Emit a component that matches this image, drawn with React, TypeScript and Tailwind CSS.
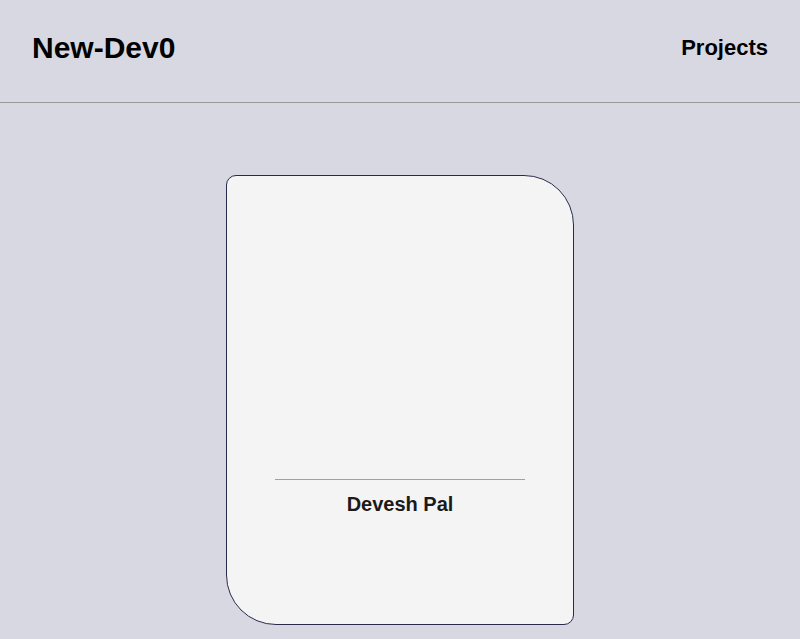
export default function App() {
  return (
    <div className="min-h-[639px] bg-[#d8d8e3] font-['Liberation_Sans',Arial,sans-serif] text-black">
      <header className="flex h-[103px] items-center justify-between border-b border-[#9a9a9a] px-8 pb-2">
        <h1 className="text-[30px] font-bold">New-Dev0</h1>
        <nav className="text-[22px] font-bold">Projects</nav>
      </header>

      <main className="flex justify-center pt-[72px]">
        <div className="flex h-[450px] w-[348px] flex-col items-center rounded-tl-[10px] rounded-tr-[50px] rounded-br-[10px] rounded-bl-[50px] border border-[#2c2a4a] bg-[#f4f4f4]">
          <div className="h-[303px]" />
          <hr className="w-[250px] border-t border-[#a0a0a0]" />
          <h2 className="mt-[9px] text-[20px] font-bold text-[#1a1a1a]">Devesh Pal</h2>
        </div>
      </main>
    </div>
  );
}
